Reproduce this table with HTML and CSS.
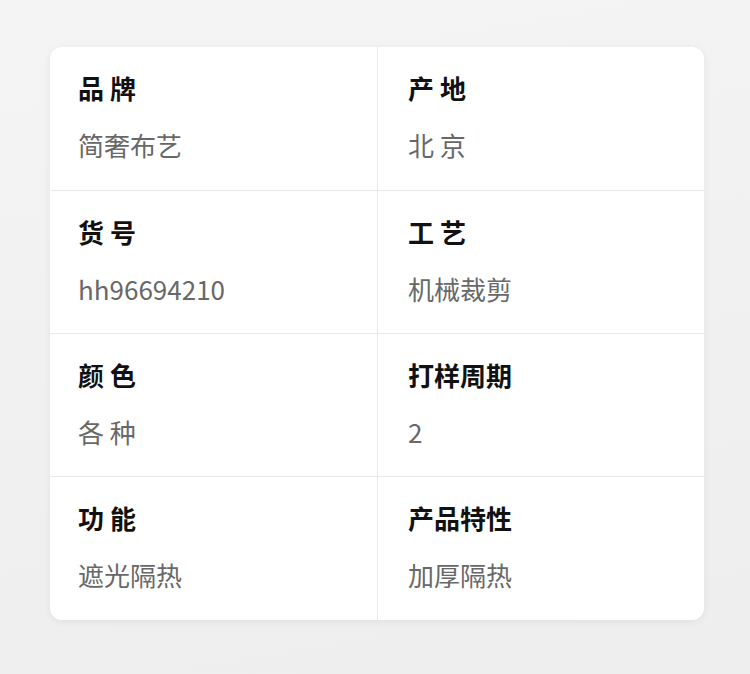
FILE: index.html
```html
<!DOCTYPE html>
<html lang="zh-CN">
<head>
  <meta charset="UTF-8">
  <meta name="viewport" content="width=device-width, initial-scale=1.0">
  <title>商品参数</title>
  <link rel="stylesheet" href="styles.css">
</head>
<body>
  <div class="spec-card">
    <div class="spec-cell">
      <div class="spec-label">品 牌</div>
      <div class="spec-value">简奢布艺</div>
    </div>
    <div class="spec-cell">
      <div class="spec-label">产 地</div>
      <div class="spec-value">北 京</div>
    </div>
    <div class="spec-cell">
      <div class="spec-label">货 号</div>
      <div class="spec-value">hh96694210</div>
    </div>
    <div class="spec-cell">
      <div class="spec-label">工 艺</div>
      <div class="spec-value">机械裁剪</div>
    </div>
    <div class="spec-cell">
      <div class="spec-label">颜 色</div>
      <div class="spec-value">各 种</div>
    </div>
    <div class="spec-cell">
      <div class="spec-label">打样周期</div>
      <div class="spec-value">2</div>
    </div>
    <div class="spec-cell">
      <div class="spec-label">功 能</div>
      <div class="spec-value">遮光隔热</div>
    </div>
    <div class="spec-cell">
      <div class="spec-label">产品特性</div>
      <div class="spec-value">加厚隔热</div>
    </div>
  </div>
</body>
</html>
```

FILE: styles.css
```css
body {
  margin: 0;
  min-height: 674px;
  padding: 47px 46px 0 50px;
  box-sizing: border-box;
  background: linear-gradient(170deg, #f4f4f4 0%, #f1f1f1 45%, #eeeeee 100%);
  font-family: "Noto Sans CJK SC", "Noto Sans", sans-serif;
}

.spec-card {
  width: 654px;
  background: #ffffff;
  border-radius: 12px;
  box-shadow: 0 2px 8px rgba(0, 0, 0, 0.06);
  display: grid;
  grid-template-columns: 327px 327px;
  overflow: hidden;
}

.spec-cell {
  height: 143px;
  box-sizing: border-box;
  padding: 23px 20px 26px 28px;
  border-top: 1px solid #e9e9e9;
}

.spec-cell:nth-child(-n+2) {
  border-top: none;
}

.spec-cell:nth-last-child(-n+2) {
  height: 144px;
}

.spec-cell:nth-child(even) {
  border-left: 1px solid #e9e9e9;
  padding-left: 30px;
}

.spec-label {
  font-size: 26px;
  line-height: 36px;
  font-weight: 700;
  color: #111111;
}

.spec-value {
  margin-top: 21px;
  font-size: 26px;
  line-height: 36px;
  color: #686868;
}
```
